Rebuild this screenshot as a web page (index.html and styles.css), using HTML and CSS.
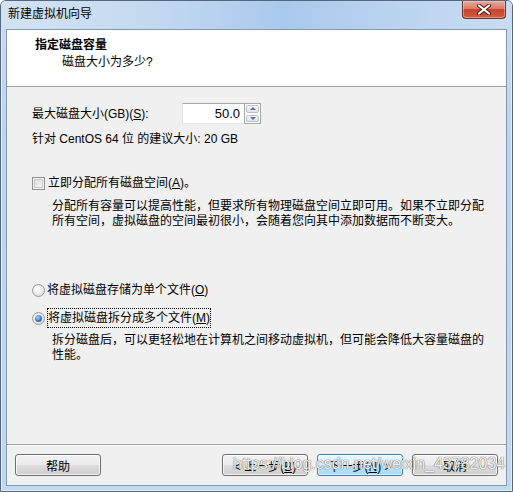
FILE: index.html
```html
<!DOCTYPE html>
<html lang="zh-CN">
<head>
    <meta charset="UTF-8">
    <title>新建虚拟机向导</title>
    <link rel="stylesheet" href="styles.css">
</head>
<body>

    <div class="window">
        <!-- Title bar -->
        <div class="titlebar">
            <span class="title">新建虚拟机向导</span>
            <div class="close">
                <svg width="14" height="11" viewBox="0 0 14 11">
                    <path d="M2 1.5 L12 9.5 M12 1.5 L2 9.5" stroke="#4a1a12" stroke-width="4" stroke-linecap="round"/>
                    <path d="M2 1.5 L12 9.5 M12 1.5 L2 9.5" stroke="#fff" stroke-width="2.2" stroke-linecap="round"/>
                </svg>
            </div>
        </div>

        <div class="client">
            <!-- Header -->
            <div class="header">
                <div class="header-title">指定磁盘容量</div>
                <div class="header-sub">磁盘大小为多少?</div>
            </div>

            <!-- Body -->
            <div class="body">
                <div class="size-row">
                    <span class="size-label">最大磁盘大小(GB)(<u>S</u>):</span>
                    <div class="spin">
                        <div class="spin-input">50.0</div>
                        <div class="spin-btns">
                            <span class="spin-btn up"></span>
                            <span class="spin-btn down"></span>
                        </div>
                    </div>
                </div>
                <div class="hint">针对 CentOS 64 位 的建议大小: 20 GB</div>

                <div class="option check-row">
                    <span class="checkbox"></span>
                    <span>立即分配所有磁盘空间(<u>A</u>)。</span>
                </div>
                <p class="desc">分配所有容量可以提高性能，但要求所有物理磁盘空间立即可用。如果不立即分配<br>所有空间，虚拟磁盘的空间最初很小，会随着您向其中添加数据而不断变大。</p>

                <div class="option radio-row">
                    <span class="radio"></span>
                    <span>将虚拟磁盘存储为单个文件(<u>O</u>)</span>
                </div>
                <div class="option radio-row second">
                    <span class="radio checked"></span>
                    <span class="focus">将虚拟磁盘拆分成多个文件(<u>M</u>)</span>
                </div>
                <p class="desc desc-split">拆分磁盘后，可以更轻松地在计算机之间移动虚拟机，但可能会降低大容量磁盘的<br>性能。</p>
            </div>

            <!-- Footer buttons -->
            <div class="footer">
                <button class="btn">帮助</button>
                <div class="spacer"></div>
                <button class="btn">&lt; 上一步(<u>B</u>)</button>
                <button class="btn default">下一步(<u>N</u>) &gt;</button>
                <button class="btn">取消</button>
            </div>
        </div>

        <div class="watermark">https://blog.csdn.net/weixin_43782034</div>
    </div>

</body>
</html>
```

FILE: styles.css
```css
* {
    box-sizing: border-box;
    margin: 0;
    padding: 0;
}
body {
    width: 513px;
    height: 492px;
    overflow: hidden;
    background: #fff;
    font-family: "Liberation Sans", "Noto Sans CJK SC", sans-serif;
    font-size: 12px;
    color: #000;
}
.window {
    position: relative;
    width: 513px;
    height: 492px;
    display: flex;
    flex-direction: column;
    border: 1px solid #55687f;
    border-radius: 6px 6px 0 0;
    background: linear-gradient(#c9dcf0, #bcd4ee 30%, #c2d8ef);
    box-shadow: inset 0 0 0 1px rgba(255, 255, 255, 0.55);
}

/* title bar */
.titlebar {
    height: 28px;
    display: flex;
    align-items: flex-start;
    padding: 0 6px 0 7px;
    background: linear-gradient(to right, #d3e2f2 0%, #c4d9f0 30%, #a9c9ec 55%, #bcd5ef 80%, #c8dcf1 100%);
    border-radius: 5px 5px 0 0;
}
.title {
    line-height: 26px;
    font-size: 12px;
    color: #000;
}
.close {
    margin-left: auto;
    width: 44px;
    height: 18px;
    display: flex;
    align-items: center;
    justify-content: center;
    border: 1px solid #6b3329;
    border-top: none;
    border-radius: 0 0 4px 4px;
    background: linear-gradient(#e9a899 0%, #dc7b68 45%, #c7432d 50%, #d35a42 100%);
    box-shadow: inset 0 0 0 1px rgba(255, 220, 210, 0.45);
}

/* client area */
.client {
    flex: 1;
    display: flex;
    flex-direction: column;
    margin: 0 5px 5px 5px;
    border: 1px solid #8299b4;
    background: #f0f0f0;
}
.header {
    height: 57px;
    background: #fff;
    border-bottom: 1px solid #a0a0a0;
    padding: 7px 0 0 28px;
}
.header-title {
    font-weight: bold;
    line-height: 16px;
}
.header-sub {
    margin-top: 1px;
    padding-left: 27px;
    line-height: 16px;
}

.body {
    flex: 1;
    padding: 16px 0 0 25px;
}
.size-row {
    display: flex;
    align-items: center;
    height: 21px;
}
.size-label {
    width: 150px;
    line-height: 16px;
}
.spin {
    display: flex;
    height: 21px;
}
.spin-input {
    width: 62px;
    height: 21px;
    border: 1px solid #abadb3;
    border-top-color: #a3a6ad;
    border-bottom-color: #e3e9ef;
    border-left-color: #e2e3ea;
    border-right: none;
    background: #fff;
    text-align: right;
    padding-right: 4px;
    line-height: 19px;
    font-size: 13px;
}
.spin-btns {
    width: 17px;
    display: flex;
    flex-direction: column;
    border: 1px solid #a7a7a7;
    background: #fff;
}
.spin-btn {
    flex: 1;
    position: relative;
    margin: 1px;
    border: 1px solid #b9c0c9;
    border-radius: 2px;
    background: linear-gradient(#f6f6f6, #e0e3e7);
}
.spin-btn::after {
    content: "";
    position: absolute;
    left: 50%;
    top: 50%;
    margin-left: -3px;
    border-left: 3px solid transparent;
    border-right: 3px solid transparent;
}
.spin-btn.up::after {
    margin-top: -2px;
    border-bottom: 3px solid #5a6e9a;
}
.spin-btn.down::after {
    margin-top: -1px;
    border-top: 3px solid #5a6e9a;
}
.hint {
    margin-top: 7px;
    line-height: 16px;
}

.option {
    display: flex;
    align-items: center;
    line-height: 16px;
}
.check-row {
    margin-top: 28px;
}
.checkbox {
    width: 13px;
    height: 13px;
    margin-right: 3px;
    border: 1px solid #8e8f8f;
    background: linear-gradient(135deg, #d6d6d6, #fbfbfb);
    box-shadow: inset 0 0 0 1px #f4f4f4, inset 0 0 0 2px #c9c9c9;
}
.desc {
    margin-top: 8px;
    padding-left: 20px;
    line-height: 15px;
}
.radio-row {
    margin-top: 53px;
}
.radio-row.second {
    margin-top: 10px;
    height: 20px;
}
.radio {
    width: 13px;
    height: 13px;
    margin-right: 2px;
    border-radius: 50%;
    border: 1px solid #9a9a9a;
    background: radial-gradient(circle at 40% 35%, #ffffff, #d8d8d8);
    position: relative;
}
.radio.checked::after {
    content: "";
    position: absolute;
    left: 2px;
    top: 2px;
    width: 7px;
    height: 7px;
    border-radius: 50%;
    background: radial-gradient(circle at 40% 35%, #a9d6ff, #2f72c4 60%, #1a4f95);
}
.focus {
    border: 1px dotted #000;
    padding: 1px 0 1px 0;
    line-height: 16px;
}
.desc-split {
    margin-top: 5px;
}

/* footer */
.footer {
    height: 41px;
    display: flex;
    align-items: flex-start;
    gap: 9px;
    padding: 9px 8px 0 8px;
    border-top: 1px solid #a0a0a0;
    box-shadow: inset 0 1px #fff;
}
.spacer {
    flex: 1;
}
.btn {
    width: 86px;
    height: 22px;
    font-family: "Liberation Sans", "Noto Sans CJK SC", sans-serif;
    font-size: 12px;
    color: #000;
    border: 1px solid #707070;
    border-radius: 3px;
    background: linear-gradient(#f2f2f2 0%, #ebebeb 50%, #dddddd 51%, #cfcfcf 100%);
    box-shadow: inset 0 0 0 1px rgba(255, 255, 255, 0.75);
}
.btn.default {
    border-color: #3c7fb1;
    background: linear-gradient(#eaf6fd 0%, #d9f0fc 50%, #bee6fd 51%, #a7d9f5 100%);
    box-shadow: inset 0 0 0 1px rgba(255, 255, 255, 0.6);
}

.watermark {
    position: absolute;
    left: 232px;
    top: 454px;
    font-family: "Liberation Sans", sans-serif;
    font-size: 16px;
    color: rgba(255, 255, 255, 0.9);
    text-shadow: 0 0 1px #6c6c6c, 0 0 1px #6c6c6c;
    white-space: nowrap;
    pointer-events: none;
}
```
